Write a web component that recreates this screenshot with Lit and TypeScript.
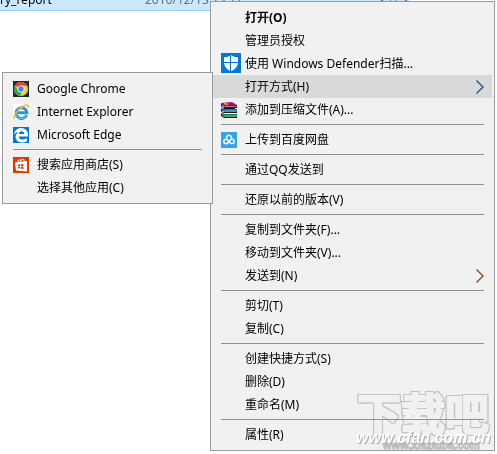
import { LitElement, html, css, nothing, TemplateResult } from "lit";
import { customElement } from "lit/decorators.js";
import { classMap } from "lit/directives/class-map.js";

type Entry = { label: string; icon?: TemplateResult; big?: boolean; bold?: boolean; arrow?: boolean; warm?: boolean; children?: Entry[][] };

const chrome = html`<svg viewBox="0 0 16 16" aria-hidden="true">
  <rect width="16" height="16" fill="#222831"/>
  <circle cx="8" cy="8" r="7" fill="#f8d03f"/>
  <path d="M8 8 2 4.400A7 7 0 0 1 14.200 4.800L8 4.800Z" fill="#e2483c"/>
  <path d="M1.900 4.500 5.200 9.600 8.600 11.200 7.200 15A7 7 0 0 1 1.900 4.500Z" fill="#35a555"/>
  <circle cx="8" cy="8" r="3.500" fill="#f4f6f8"/><circle cx="8" cy="8" r="2.700" fill="#4285e8"/>
</svg>`;
const ie = html`<svg viewBox="0 0 16 16" aria-hidden="true">
  <rect width="16" height="16" fill="#fff"/>
  <path d="M13.600 11A5.400 5.400 0 1 1 13.900 8.800H4.600" fill="none" stroke="#2f96d4" stroke-width="3"/>
  <path d="M12.800 11A4.800 4.800 0 0 1 3.500 8.500" fill="none" stroke="#74c8f0"/>
  <path d="M1.600 15C-.6 13 5 4.500 11 1.700 14 .4 15.800 1 14.800 4" fill="none" stroke="#f0b92c" stroke-width="1.500"/>
</svg>`;
const edge = html`<svg viewBox="0 0 16 16" aria-hidden="true">
  <rect width="16" height="16" fill="#0078d7"/>
  <path d="M1 7.500C1.600 3.300 4.500 1 8.200 1 12.300 1 15 4 15 7.800V9.400H5.700C5.900 11.600 7.700 12.500 9.700 12.500 11.300 12.500 12.800 12 14 11.300V14.300C12.600 15.100 10.900 15.500 9 15.500 5 15.500 2.600 13.100 2.600 9.800 2.600 7.600 3.900 5.900 5.700 5 3.700 5.200 2 6.200 1 7.500ZM5.800 7H11.200C11.200 5.300 10.200 4.300 8.600 4.300 7.100 4.300 6 5.400 5.800 7Z" fill="#fff"/>
</svg>`;
const store = html`<svg viewBox="0 0 16 16" aria-hidden="true">
  <rect width="16" height="16" fill="#dc3c00"/>
  <path d="M2 5.500 14 4V14.500L3 13.500Z" fill="#fff"/>
  <path d="M5 5V3.500Q6.500 2 8 3.500V4.500M7 4.500Q8.500 1 11 2.500V4.500" fill="none" stroke="#fff"/>
  <path d="M5 7.600 7.200 7.300V9H5ZM8 7.200 10.500 6.900V9H8ZM5 9.800H7.200V11.500L5 11.300ZM8 9.800H10.500V12L8 11.700Z" fill="#dc3c00"/>
</svg>`;
const defender = html`<svg viewBox="0 0 20 20" aria-hidden="true">
  <rect width="20" height="20" fill="#0078d7"/>
  <path d="M10 2C12 3.500 14.500 4.300 17 4.300V9C17 13.500 14 16.500 10 18.200 6 16.500 3 13.500 3 9V4.300C5.500 4.300 8 3.500 10 2Z" fill="#fff"/>
  <path d="M9.500 2V18.500M3 9.500H17" stroke="#0078d7"/>
</svg>`;
const rar = html`<svg viewBox="0 0 16 16" aria-hidden="true">
  <path d="M0 1 11 0 16 3V5H4L0 3Z" fill="#a0195f"/><path d="M4 3H16V5H4Z" fill="#7c1048"/>
  <path d="M0 6 4 7H16V10H4L0 8.500Z" fill="#2268b8"/>
  <path d="M0 11 4 12H16V15H4L0 13.500Z" fill="#1d8353"/>
  <path d="M3 5.500H16M3 10.500H16M3 15.500H16M3 6.500H14" stroke="#1b1b1b"/>
  <path d="M4 4.500H15M4 9H15M4 14H15" stroke="#d8d8d8" stroke-width=".6"/>
  <path d="M.5 2V4.500L3 6M.5 7V9.500L3 11M.5 12V14L3 15.500" fill="none" stroke="#301828"/>
  <path d="M3 1.500 7 2.500" stroke="#d8ac3c" stroke-width="1.500"/>
</svg>`;
const baidu = html`<svg viewBox="0 0 16 16" aria-hidden="true">
  <rect width="16" height="16" fill="#36a5e8"/>
  <g fill="none" stroke="#fff" stroke-width="1.500"><path d="M5.600 6.600A2.500 2.500 0 1 1 10.300 6.800"/><path d="M9.600 7.800 6.600 10.900A2.200 2.200 0 1 1 6.400 7.800L9.500 10.900A2.200 2.200 0 1 0 9.600 7.800"/></g>
</svg>`;

const openWith: Entry[][] = [
  [{ label: "Google Chrome", icon: chrome }, { label: "Internet Explorer", icon: ie }, { label: "Microsoft Edge", icon: edge }],
  [{ label: "搜索应用商店(S)", icon: store }, { label: "选择其他应用(C)" }],
];
const mainMenu: Entry[][] = [
  [
    { label: "打开(O)", bold: true },
    { label: "管理员授权" },
    { label: "使用 Windows Defender扫描...", icon: defender, big: true },
    { label: "打开方式(H)", arrow: true, children: openWith },
    { label: "添加到压缩文件(A)...", icon: rar },
  ],
  [{ label: "上传到百度网盘", icon: baidu }],
  [{ label: "通过QQ发送到" }],
  [{ label: "还原以前的版本(V)" }],
  [{ label: "复制到文件夹(F)..." }, { label: "移动到文件夹(V)..." }, { label: "发送到(N)", arrow: true, warm: true }],
  [{ label: "剪切(T)" }, { label: "复制(C)" }],
  [{ label: "创建快捷方式(S)" }, { label: "删除(D)" }, { label: "重命名(M)" }],
  [{ label: "属性(R)" }],
];

@customElement("context-menu")
class ContextMenu extends LitElement {
  static properties = { groups: { attribute: false } };
  declare groups: Entry[][];

  static styles = css`
    :host { display: block; box-sizing: border-box; padding: 4px 2px; background: #f1f1f1; border: 1px solid #9b9b9b; }
    .rule { height: 1px; margin: 3px 8px; border: 0; background: #919191; }
    .item { position: relative; }
    .command {
      display: grid; grid-template-columns: 16px 1fr 8px; column-gap: 8px; align-items: center;
      width: 100%; height: 23px; padding: 0 8px; border: 0; background: none; color: #000;
      font: 12px/23px "Noto Sans", "Noto Sans CJK SC", sans-serif; text-align: left; white-space: nowrap;
    }
    .bold { font-weight: 700; }
    .command:hover, .open { background: #d9d9d9; }
    .icon { display: grid; height: 16px; }
    .icon svg { width: 16px; height: 16px; }
    .big svg { width: 20px; height: 20px; }
    .big { align-self: start; height: 20px; margin-top: 1px; }
    .arrow { width: 8px; height: 14px; fill: none; stroke: #174f80; stroke-width: 1.3; }
    .warm { stroke: #8a4312; }
    .submenu { position: absolute; z-index: 1; top: -3px; right: 100%; width: 211px; }
  `;

  private entry(e: Entry): TemplateResult {
    return html`<div class="item">
      <button class=${classMap({ command: true, bold: !!e.bold, open: !!e.children })} role="menuitem">
        <span class=${classMap({ icon: true, big: !!e.big })}>${e.icon ?? nothing}</span>
        <span>${e.label}</span>
        ${e.arrow ? html`<svg class=${classMap({ arrow: true, warm: !!e.warm })} viewBox="0 0 8 14" aria-hidden="true"><path d="M.5.500 7 7 .5 13.500"/></svg>` : nothing}
      </button>
      ${e.children ? html`<context-menu class="submenu" role="menu" .groups=${e.children}></context-menu>` : nothing}
    </div>`;
  }

  render() {
    return html`${(this.groups ?? []).map((g, i) => html`${i ? html`<hr class="rule">` : nothing}${g.map((e) => this.entry(e))}`)}`;
  }
}

@customElement("app-root")
class AppRoot extends LitElement {
  static styles = css`
    :host {
      display: block; position: relative; min-height: 100vh; overflow: hidden; background: #fff;
      font: 12px/16px "Noto Sans", "Noto Sans CJK SC", sans-serif;
    }
    .file {
      display: flex; align-items: flex-end; box-sizing: border-box;
      width: 410px; height: 11px; padding-bottom: 2px; overflow: hidden;
      background: #cce8ff; border-bottom: 1px solid #99d1ff; color: #6d6d6d; white-space: nowrap;
    }
    .file span { flex: none; height: 16px; }
    .name { width: 145px; color: #000; }
    .date { width: 231px; }
    .menu { position: absolute; top: 1px; left: 210px; right: 2px; }
    .mark {
      position: absolute; right: 5px; bottom: 2px; width: 136px; height: 62px;
      pointer-events: none; mix-blend-mode: darken;
    }
    .cfan { mix-blend-mode: normal; }
    .brand {
      font: 700 44px "Noto Sans CJK SC", sans-serif; fill: #f1f1f1; stroke: #f1f1f1; stroke-width: 2px;
      filter: drop-shadow(1px 0 0 #c4c4c4) drop-shadow(-1px 0 0 #c4c4c4) drop-shadow(0 1px 0 #c4c4c4) drop-shadow(0 -1px 0 #c4c4c4);
    }
    .site { font: 700 11px "Liberation Sans", sans-serif; fill: #e6e6e6; stroke: #b8b8b8; }
    .host {
      font: italic bold 16px "Liberation Sans", sans-serif; fill: #fff;
      filter: drop-shadow(1px 1px 0 #aaa);
    }
  `;

  render() {
    return html`
      <div class="file"><span class="name">ry_report</span><span class="date">2016/12/13 13:17</span><span>文件夹</span></div>
      <context-menu class="menu" role="menu" .groups=${mainMenu}></context-menu>
      <svg class="mark" viewBox="0 0 136 62">
        <text class="brand" x="1" y="41">下载吧</text>
        <text class="site" x="27" y="59">www.xiazaiba.com</text>
      </svg>
      <svg class="mark cfan" viewBox="0 0 136 62">
        <text class="host" x="0" y="53">www.cfan.com.cn</text>
      </svg>
    `;
  }
}
